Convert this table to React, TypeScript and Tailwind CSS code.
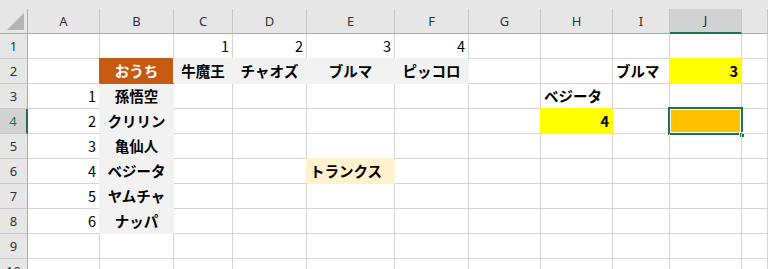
import type { ReactNode } from 'react'

type Align = 'left' | 'center' | 'right'

type CellData = {
  v: string
  align: Align
  bold?: boolean
  // fill covers the gridlines around the cell, so each filled cell carries its own border + shadow colour
  fill?: string
}

const columns = ['A', 'B', 'C', 'D', 'E', 'F', 'G', 'H', 'I', 'J', 'K']
const rows = [1, 2, 3, 4, 5, 6, 7, 8, 9, 10]

const ORANGE = 'bg-[#c55a11] border-[#c55a11] shadow-[-1px_-1px_0_0_#c55a11] text-white'
const GRAY = 'bg-[#f2f2f2] border-[#f2f2f2] shadow-[-1px_-1px_0_0_#f2f2f2]'
const GRAY_COL = 'bg-[#f2f2f2] border-[#f2f2f2] shadow-[-1px_0_0_0_#f2f2f2]'
const CREAM = 'bg-[#fff2cc] border-[#fff2cc] shadow-[-1px_-1px_0_0_#fff2cc]'
const YELLOW = 'bg-[#ffff00] border-[#ffff00] shadow-[-1px_-1px_0_0_#ffff00]'
const AMBER = 'bg-[#ffc000] border-[#ffc000]'

const sheet: Record<string, CellData> = {
  C1: { v: '1', align: 'right' },
  D1: { v: '2', align: 'right' },
  E1: { v: '3', align: 'right' },
  F1: { v: '4', align: 'right' },
  B2: { v: 'おうち', align: 'center', bold: true, fill: ORANGE },
  C2: { v: '牛魔王', align: 'center', bold: true, fill: GRAY },
  D2: { v: 'チャオズ', align: 'center', bold: true, fill: GRAY },
  E2: { v: 'ブルマ', align: 'center', bold: true, fill: GRAY },
  F2: { v: 'ピッコロ', align: 'center', bold: true, fill: GRAY },
  I2: { v: 'ブルマ', align: 'left', bold: true },
  J2: { v: '3', align: 'right', bold: true, fill: YELLOW },
  A3: { v: '1', align: 'right' },
  B3: { v: '孫悟空', align: 'center', bold: true, fill: GRAY_COL },
  H3: { v: 'ベジータ', align: 'left', bold: true },
  A4: { v: '2', align: 'right' },
  B4: { v: 'クリリン', align: 'center', bold: true, fill: GRAY_COL },
  H4: { v: '4', align: 'right', bold: true, fill: YELLOW },
  J4: { v: '', align: 'left', fill: AMBER },
  A5: { v: '3', align: 'right' },
  B5: { v: '亀仙人', align: 'center', bold: true, fill: GRAY_COL },
  A6: { v: '4', align: 'right' },
  B6: { v: 'ベジータ', align: 'center', bold: true, fill: GRAY_COL },
  E6: { v: 'トランクス', align: 'left', bold: true, fill: CREAM },
  A7: { v: '5', align: 'right' },
  B7: { v: 'ヤムチャ', align: 'center', bold: true, fill: GRAY_COL },
  A8: { v: '6', align: 'right' },
  B8: { v: 'ナッパ', align: 'center', bold: true, fill: GRAY_COL },
}

const alignClass: Record<Align, string> = {
  left: 'justify-start pl-[3px]',
  center: 'justify-center',
  right: 'justify-end pr-[3px]',
}

const activeCol = 'J'
const activeRow = 4

function HeaderCell({ children, active }: { children: ReactNode; active?: boolean }) {
  return (
    <div
      className={
        active
          ? 'flex h-[25px] items-center justify-center border-r border-b-2 border-r-[#c6c6c6] border-b-[#217346] bg-[#d2d2d2] text-[#1f1f1f]'
          : 'flex h-[25px] items-center justify-center border-r border-b border-r-[#c6c6c6] border-b-[#ababab] bg-[#e6e6e6] text-[#333]'
      }
    >
      {children}
    </div>
  )
}

function RowHeader({ n }: { n: number }) {
  const active = n === activeRow
  return (
    <div
      className={
        active
          ? 'flex h-[25px] items-center justify-center border-r-2 border-b border-r-[#217346] border-b-[#c6c6c6] bg-[#d2d2d2] text-[#217346]'
          : 'flex h-[25px] items-center justify-center border-r border-b border-r-[#ababab] border-b-[#c6c6c6] bg-[#e6e6e6] text-[#333]'
      }
    >
      {n}
    </div>
  )
}

function SheetCell({ id }: { id: string }) {
  const cell = sheet[id]
  const isActive = id === `${activeCol}${activeRow}`
  const base = 'relative flex h-[25px] items-center border-r border-b whitespace-nowrap'
  if (!cell) {
    return <div className={`${base} border-[#d4d4d4]`} />
  }
  return (
    <div
      className={`${base} ${alignClass[cell.align]} ${cell.fill ?? 'border-[#d4d4d4]'} ${
        cell.bold ? 'font-bold' : 'font-normal'
      }`}
    >
      {cell.v}
      {isActive && (
        <>
          <div className="pointer-events-none absolute -top-[2px] -left-[2px] h-[28px] w-[75px] border-2 border-[#217346]">
            <div className="h-full w-full border border-white" />
          </div>
          <div className="absolute top-[23px] left-[69px] h-[6px] w-[6px] border border-white bg-[#217346]" />
        </>
      )}
    </div>
  )
}

export default function App() {
  return (
    <div className="h-[269px] w-[768px] overflow-hidden bg-white">
      <div className="h-[9px] bg-[#e6e6e6]" />
      <div
        className="grid grid-cols-[28px_72px_74px_59px_74px_88px_74px_72px_72px_57px_72px_1fr] text-[14.5px] leading-none text-black"
        style={{ fontFamily: '"Noto Sans CJK JP", "Noto Sans", sans-serif' }}
      >
        {/* corner + column letters; K is only a sliver, its letter sits off-screen */}
        <div className="relative h-[25px] border-r border-b border-r-[#ababab] border-b-[#ababab] bg-[#e6e6e6]">
          <svg className="absolute right-[3px] bottom-[3px]" width="17" height="17" viewBox="0 0 17 17">
            <polygon points="17,0 17,17 0,17" fill="#b4b4b4" />
          </svg>
        </div>
        {columns.map((c) => (
          <HeaderCell key={c} active={c === activeCol}>
            <span className="text-[13px]" style={{ fontFamily: '"Noto Sans", sans-serif' }}>
              {c === 'K' ? '' : c}
            </span>
          </HeaderCell>
        ))}

        {rows.map((r) => (
          <div key={r} className="contents">
            <div className="text-[13px]" style={{ fontFamily: '"Noto Sans", sans-serif' }}>
              <RowHeader n={r} />
            </div>
            {columns.map((c) => (
              <SheetCell key={c} id={`${c}${r}`} />
            ))}
          </div>
        ))}
      </div>
    </div>
  )
}
